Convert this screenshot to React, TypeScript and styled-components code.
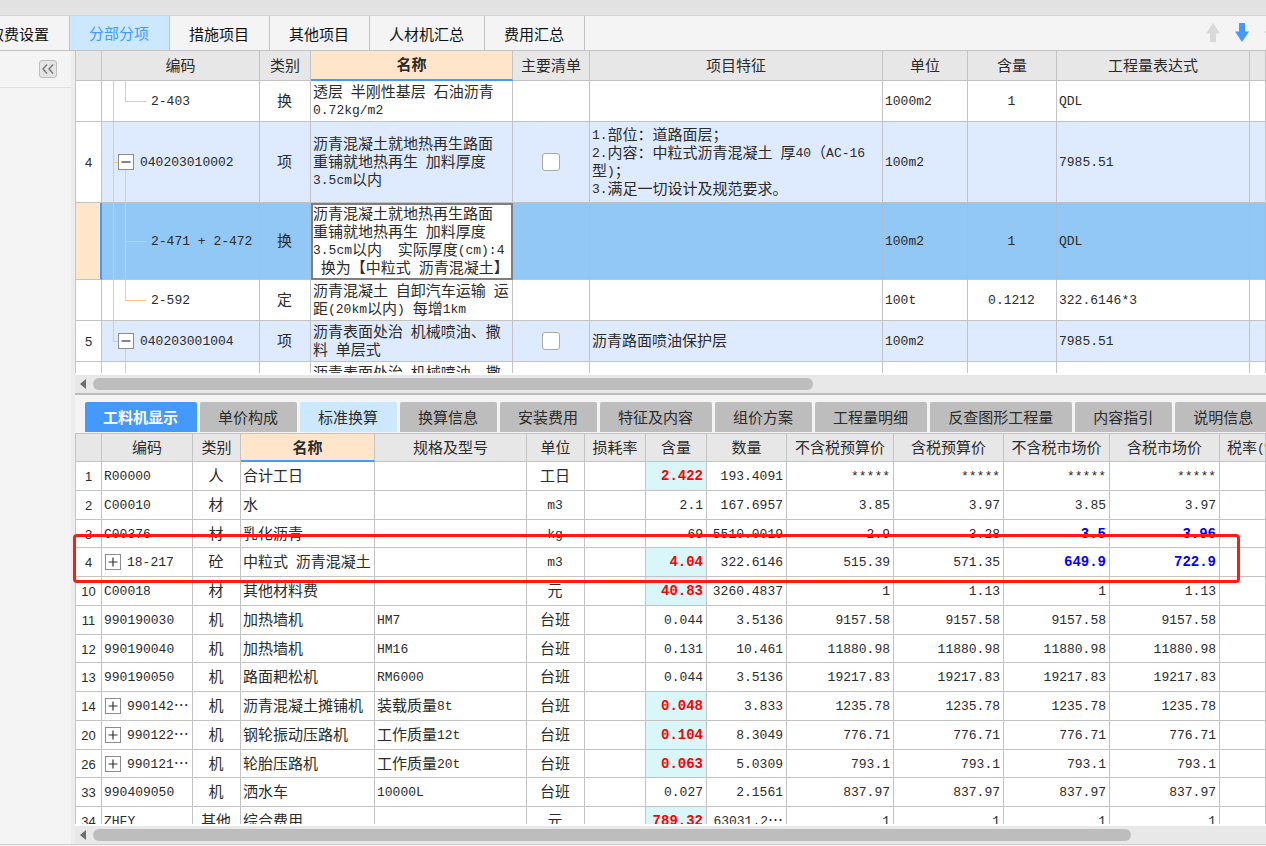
import React, { Fragment } from 'react';
import styled, { createGlobalStyle, css } from 'styled-components';

const cjk = "'Noto Sans CJK SC', 'Noto Sans', sans-serif";
const mono = "'Liberation Mono', 'Noto Sans CJK SC', monospace";
const line = '#c3c3c3';
const blue = '#4499ff';

const GlobalStyle = createGlobalStyle`
  * { box-sizing: border-box; }
  body { margin: 0; background: #f4f4f4; color: #2b2b2b; font: 15px/18px ${cjk}; }
  button { font: inherit; color: inherit; margin: 0; padding: 0; border: 0; background: none; cursor: pointer; }
`;

const Page = styled.div`
  display: flex;
  flex-direction: column;
  height: 100vh;
  overflow: hidden;
`;
const TopBand = styled.div`
  flex: none;
  height: 16px;
  background: #e2e2e2;
  border-bottom: 1px solid #d2d2d2;
`;
const TabBar = styled.nav`
  flex: none;
  display: flex;
  height: 35px;
  border-bottom: 1px solid ${line};
  overflow: hidden;
`;
const TabList = styled.div`
  display: flex;
  flex: none;
  margin-left: -30px;
`;
const MainTab = styled.button<{ $active?: boolean }>`
  padding: 2px 20px 0 19px;
  border-right: 1px solid ${line};
  color: #111;
  white-space: nowrap;
  ${(p) => p.$active && css`
    padding-top: 0;
    background: #cce8ff;
    color: ${blue};
  `}
`;
const MoveActions = styled.div`
  display: flex;
  align-items: center;
  gap: 15px;
  margin: 0 -17px 2px auto;
`;
const IconButton = styled.button`
  display: flex;
`;

const Body = styled.div`
  flex: 1;
  min-height: 0;
  display: flex;
`;
const Sidebar = styled.aside`
  flex: none;
  width: 75px;
  border-right: 4px solid #ededed;
`;
const SidebarHead = styled.div`
  display: flex;
  align-items: center;
  justify-content: flex-end;
  height: 37px;
  padding-right: 14px;
  border-bottom: 1px solid #e0e0e0;
`;
const CollapseButton = styled.button`
  display: flex;
  align-items: center;
  justify-content: center;
  width: 18px;
  height: 18px;
  border: 1px solid #bdbdbd;
  border-radius: 3px;
  background: #e4e4e4;
`;
const Content = styled.main`
  flex: 1;
  min-width: 0;
  display: flex;
  flex-direction: column;
`;
const UpperPane = styled.section`
  flex: 342 1 0;
  min-height: 0;
  display: flex;
  flex-direction: column;
`;
const LowerPane = styled.section`
  position: relative;
  flex: 449 1 0;
  min-height: 0;
  display: flex;
  flex-direction: column;
  border-top: 2px solid #bdbdbd;
`;
const TableView = styled.div`
  flex: 1;
  min-height: 0;
  overflow: hidden;
  background: #fff;
  border-bottom: 2px solid #fff;
`;
const Scrollbar = styled.div`
  flex: none;
  display: flex;
  align-items: center;
  gap: 6px;
  height: 18px;
  padding-left: 5px;
  background: #e8e8e8;
`;
const Thumb = styled.div<{ $share: string }>`
  width: ${(p) => p.$share};
  height: 12px;
  border-radius: 6px;
  background: #bdbdbd;
`;
const Footer = styled.footer`
  flex: none;
  height: 2px;
  border-top: 1px solid #cfcfcf;
`;

const Grid = styled.table`
  width: 100%;
  table-layout: fixed;
  border-collapse: separate;
  border-spacing: 0;
`;
const Column = styled.col<{ $w?: number }>`
  width: ${(p) => (p.$w ? `${p.$w}px` : 'auto')};
`;
const HeadCell = styled.th<{ $sorted?: boolean; $start?: boolean }>`
  height: 30px;
  padding: 0 0 2px;
  overflow: hidden;
  white-space: nowrap;
  font-weight: 400;
  text-align: ${(p) => (p.$start ? 'left' : 'center')};
  padding-left: ${(p) => (p.$start ? '7px' : '0')};
  background: #e7e7e7;
  border-right: 1px solid ${line};
  border-bottom: 1px solid ${line};
  &:first-child { border-left: 1px solid ${line}; }
  ${(p) => p.$sorted && css`
    background: #ffe6ca;
    border-bottom: 2px solid ${blue};
    font-weight: 700;
  `}
`;
const Cell = styled.td<{ $align?: 'left' | 'center' | 'right'; $mark?: 'rate' }>`
  position: relative;
  padding: 0 3px 2px 2px;
  overflow: hidden;
  white-space: pre;
  text-align: ${(p) => p.$align || 'left'};
  border-right: 1px solid ${line};
  border-bottom: 1px solid ${line};
  ${(p) => p.$mark && css`background: #d9f7f9;`}
`;
const IndexCell = styled.th`
  padding: 2px 0 0;
  background: #fff;
  border: 1px solid ${line};
  border-top: 0;
  font: 13px/18px 'Liberation Sans', sans-serif;
  text-align: center;
`;
const ItemRow = styled.tr<{ $h: number; $kind?: 'group' | 'selected' }>`
  height: ${(p) => p.$h}px;
  ${(p) => p.$kind === 'group' && css`background: #deeafe;`}
  ${(p) => p.$kind === 'selected' && css`
    background: #92c8f6;
    ${IndexCell} { background: #ffe6ca; border-right: 2px solid ${blue}; }
    ${Cell} { border-right-color: #a4bfd6; }
    ${Cell}:nth-child(4) {
      background: #fff;
      outline: 2px solid #7f7f7f;
      outline-offset: -2px;
    }
  `}
`;
const ResourceHead = styled.tr`
  ${HeadCell} { height: 29px; padding-bottom: 1px; border-top: 1px solid ${line}; }
`;
const ResourceRow = styled.tr`
  height: 29px;
  &:nth-child(4n + 3) { height: 28px; }
`;

const Latin = styled.span<{ $strong?: string }>`
  font-family: ${mono};
  font-size: 13px;
  line-height: 12px;
  vertical-align: 1px;
  ${(p) => p.$strong && css`
    font-size: 14px;
    font-weight: 700;
    color: ${p.$strong};
  `}
`;
const Check = styled.input`
  appearance: none;
  display: block;
  width: 18px;
  height: 18px;
  margin: 2px auto 0;
  border: 1px solid #a9a9a9;
  border-radius: 3px;
  background: #fff;
`;
const CodeBox = styled.div<{ $indent: number }>`
  display: flex;
  align-items: center;
  gap: 6px;
  padding-left: ${(p) => p.$indent}px;
`;
const Toggle = styled.button`
  flex: none;
  display: flex;
  align-items: center;
  justify-content: center;
  width: 16px;
  height: 16px;
  margin-top: 2px;
  border: 1px solid #8c8c8c;
  background: #fff;
`;
const Stem = styled.i<{ $x: number; $part: 'full' | 'upper' | 'lower' }>`
  position: absolute;
  left: ${(p) => p.$x}px;
  top: ${(p) => (p.$part === 'lower' ? 'calc(50% + 8px)' : '0')};
  bottom: ${(p) => (p.$part === 'upper' ? '50%' : '-1px')};
  width: 1px;
  background: #ffc777;
`;
const Twig = styled.i<{ $x: number; $w: number }>`
  position: absolute;
  left: ${(p) => p.$x}px;
  top: 50%;
  width: ${(p) => p.$w}px;
  height: 1px;
  background: #ffc777;
`;

const DetailTabs = styled.nav`
  flex: none;
  display: flex;
  gap: 3px;
  height: 38px;
  padding: 7px 0 1px 10px;
  overflow: hidden;
`;
const DetailTab = styled.button<{ $tone?: 'active' | 'hint' }>`
  flex: none;
  padding: 0 19px 0 18px;
  border-radius: 2px 2px 0 0;
  white-space: nowrap;
  background: #bdbdbd;
  ${(p) => p.$tone === 'active' && css`background: ${blue}; color: #fff; font-weight: 700;`}
  ${(p) => p.$tone === 'hint' && css`background: #cce8ff;`}
`;
const Highlight = styled.div`
  position: absolute;
  left: -2px;
  top: 139px;
  width: 1167px;
  height: 49px;
  border: 3px solid #ff1b10;
  border-radius: 4px;
  pointer-events: none;
`;

/* Half-width runs are set in the fixed-pitch face, the rest stays in the CJK face. */
function Mixed({ text, strong }: { text: string; strong?: string }) {
  return (
    <>
      {text.split(/([\x20-\x7e]+)/).map((part, i) =>
        i % 2 ? <Latin key={i} $strong={strong}>{part}</Latin> : <Fragment key={i}>{part}</Fragment>,
      )}
    </>
  );
}

function Arrow({ dir, color }: { dir: 'up' | 'down' | 'left'; color: string }) {
  const turn = { up: 0, down: 180, left: -90 }[dir];
  const side = dir === 'left';
  return (
    <svg width={side ? 19 : 14} height={side ? 14 : 19} viewBox={side ? '-9.5 -7 19 14' : '-7 -9.5 14 19'}>
      <path transform={`rotate(${turn})`} d="M0 -9.5L7 1H3V9.5H-3V1H-7Z" fill={color} />
    </svg>
  );
}

function ScrollTrack({ share, label }: { share: string; label: string }) {
  return (
    <Scrollbar>
      <IconButton aria-label={label}>
        <svg width="7" height="10" viewBox="0 0 7 10"><path d="M6 0V10L0 5Z" fill="#6d6d72" /></svg>
      </IconButton>
      <Thumb $share={share} />
    </Scrollbar>
  );
}

function ExpandToggle({ open }: { open: boolean }) {
  return (
    <Toggle aria-label={open ? '折叠' : '展开'}>
      <svg width="10" height="10" viewBox="0 0 10 10">
        <path d={open ? 'M0.5 5H9.5' : 'M0.5 5H9.5M5 0.5V9.5'} stroke="#333" strokeWidth="1.2" />
      </svg>
    </Toggle>
  );
}

const mainTabs = ['取费设置', '分部分项', '措施项目', '其他项目', '人材机汇总', '费用汇总'];
const itemHeads = ['', '编码', '类别', '名称', '主要清单', '项目特征', '单位', '含量', '工程量表达式', ''];
const itemWidths = [27, 158, 51, 202, 77, 293, 85, 89, 193];

type Item = {
  no: string; code: string; type: string; name: string; feature?: string;
  unit: string; rate: string; expr: string; h: number;
  kind?: 'group' | 'selected'; node: 'leaf' | 'last' | 'group' | 'lastGroup' | 'rest';
};
const items: Item[] = [
  { no: '', code: '2-403', type: '换', name: '透层 半刚性基层 石油沥青\n0.72kg/m2', unit: '1000m2', rate: '1', expr: 'QDL', h: 41, node: 'last' },
  { no: '4', code: '040203010002', type: '项', name: '沥青混凝土就地热再生路面\n重铺就地热再生 加料厚度\n3.5cm以内', feature: '1.部位：道路面层；\n2.内容：中粒式沥青混凝土 厚40（AC-16\n型)；\n3.满足一切设计及规范要求。', unit: '100m2', rate: '', expr: '7985.51', h: 81, kind: 'group', node: 'group' },
  { no: '', code: '2-471 + 2-472', type: '换', name: '沥青混凝土就地热再生路面\n重铺就地热再生 加料厚度\n3.5cm以内  实际厚度(cm):4\n 换为【中粒式 沥青混凝土】', unit: '100m2', rate: '1', expr: 'QDL', h: 77, kind: 'selected', node: 'leaf' },
  { no: '', code: '2-592', type: '定', name: '沥青混凝土 自卸汽车运输 运\n距(20km以内) 每增1km', unit: '100t', rate: '0.1212', expr: '322.6146*3', h: 41, node: 'last' },
  { no: '5', code: '040203001004', type: '项', name: '沥青表面处治 机械喷油、撒\n料 单层式', feature: '沥青路面喷油保护层', unit: '100m2', rate: '', expr: '7985.51', h: 41, kind: 'group', node: 'lastGroup' },
  { no: '', code: '', type: '', name: '沥青表面处治 机械喷油、撒\n料 单层式', unit: '', rate: '', expr: '', h: 41, node: 'rest' },
];

function ItemCode({ item }: { item: Item }) {
  const { node, code } = item;
  const group = node === 'group' || node === 'lastGroup';
  return (
    <>
      {node !== 'rest' && <Stem $x={11} $part={node === 'lastGroup' ? 'upper' : 'full'} />}
      {group && <Twig $x={11} $w={5} />}
      {group && <Stem $x={23} $part="lower" />}
      {(node === 'leaf' || node === 'rest') && <Stem $x={23} $part="full" />}
      {node === 'last' && <Stem $x={23} $part="upper" />}
      {(node === 'leaf' || node === 'last') && <Twig $x={23} $w={21} />}
      <CodeBox $indent={group ? 14 : 47}>
        {group && <ExpandToggle open />}
        <span><Mixed text={code} /></span>
      </CodeBox>
    </>
  );
}

const detailTabs = ['工料机显示', '单价构成', '标准换算', '换算信息', '安装费用', '特征及内容', '组价方案', '工程量明细', '反查图形工程量', '内容指引', '说明信息'];
const resourceHeads = ['', '编码', '类别', '名称', '规格及型号', '单位', '损耗率', '含量', '数量', '不含税预算价', '含税预算价', '不含税市场价', '含税市场价', '税率(%)'];
const resourceWidths = [27, 91, 48, 134, 152, 58, 61, 61, 80, 107, 110, 106, 110];

type Resource = {
  no: string; code: string; type: string; name: string; spec: string; unit: string;
  rate: string; qty: string; prices: string[]; folded?: boolean; hot?: boolean; edited?: boolean;
};
const same = (a: string, b = a) => [a, b, a, b];
const resources: Resource[] = [
  { no: '1', code: 'R00000', type: '人', name: '合计工日', spec: '', unit: '工日', rate: '2.422', qty: '193.4091', prices: same('*****'), hot: true },
  { no: '2', code: 'C00010', type: '材', name: '水', spec: '', unit: 'm3', rate: '2.1', qty: '167.6957', prices: same('3.85', '3.97') },
  { no: '3', code: 'C00376', type: '材', name: '乳化沥青', spec: '', unit: 'kg', rate: '69', qty: '5510.0019', prices: ['2.9', '3.28', '3.5', '3.96'], edited: true },
  { no: '4', code: '18-217', type: '砼', name: '中粒式 沥青混凝土', spec: '', unit: 'm3', rate: '4.04', qty: '322.6146', prices: ['515.39', '571.35', '649.9', '722.9'], folded: true, hot: true, edited: true },
  { no: '10', code: 'C00018', type: '材', name: '其他材料费', spec: '', unit: '元', rate: '40.83', qty: '3260.4837', prices: same('1', '1.13'), hot: true },
  { no: '11', code: '990190030', type: '机', name: '加热墙机', spec: 'HM7', unit: '台班', rate: '0.044', qty: '3.5136', prices: same('9157.58') },
  { no: '12', code: '990190040', type: '机', name: '加热墙机', spec: 'HM16', unit: '台班', rate: '0.131', qty: '10.461', prices: same('11880.98') },
  { no: '13', code: '990190050', type: '机', name: '路面耙松机', spec: 'RM6000', unit: '台班', rate: '0.044', qty: '3.5136', prices: same('19217.83') },
  { no: '14', code: '990142…', type: '机', name: '沥青混凝土摊铺机', spec: '装载质量8t', unit: '台班', rate: '0.048', qty: '3.833', prices: same('1235.78'), folded: true, hot: true },
  { no: '20', code: '990122…', type: '机', name: '钢轮振动压路机', spec: '工作质量12t', unit: '台班', rate: '0.104', qty: '8.3049', prices: same('776.71'), folded: true, hot: true },
  { no: '26', code: '990121…', type: '机', name: '轮胎压路机', spec: '工作质量20t', unit: '台班', rate: '0.063', qty: '5.0309', prices: same('793.1'), folded: true, hot: true },
  { no: '33', code: '990409050', type: '机', name: '洒水车', spec: '10000L', unit: '台班', rate: '0.027', qty: '2.1561', prices: same('837.97') },
  { no: '34', code: 'ZHFY', type: '其他', name: '综合费用', spec: '', unit: '元', rate: '789.32', qty: '63031.2…', prices: same('1'), hot: true },
];

export default function App() {
  return (
    <Page lang="zh-CN">
      <GlobalStyle />
      <TopBand />
      <TabBar>
        <TabList>
          {mainTabs.map((t) => <MainTab key={t} $active={t === '分部分项'}>{t}</MainTab>)}
        </TabList>
        <MoveActions>
          <IconButton aria-label="上移"><Arrow dir="up" color="#d9d9d9" /></IconButton>
          <IconButton aria-label="下移"><Arrow dir="down" color={blue} /></IconButton>
          <IconButton aria-label="左移"><Arrow dir="left" color="#d9d9d9" /></IconButton>
        </MoveActions>
      </TabBar>
      <Body>
        <Sidebar>
          <SidebarHead>
            <CollapseButton aria-label="收起">
              <svg width="12" height="10" viewBox="0 0 12 10" fill="none" stroke="#777" strokeWidth="1.4">
                <path d="M5 0.5L1 5L5 9.5M11 0.5L7 5L11 9.5" />
              </svg>
            </CollapseButton>
          </SidebarHead>
        </Sidebar>
        <Content>
          <UpperPane>
            <TableView>
              <Grid>
                <colgroup>
                  {itemWidths.map((w, i) => <Column key={i} $w={w} />)}
                  <Column />
                </colgroup>
                <thead>
                  <tr>{itemHeads.map((h, i) => <HeadCell key={i} $sorted={h === '名称'}>{h}</HeadCell>)}</tr>
                </thead>
                <tbody>
                  {items.map((it, i) => (
                    <ItemRow key={i} $h={it.h} $kind={it.kind}>
                      <IndexCell>{it.no}</IndexCell>
                      <Cell><ItemCode item={it} /></Cell>
                      <Cell $align="center">{it.type}</Cell>
                      <Cell><Mixed text={it.name} /></Cell>
                      <Cell>{it.kind === 'group' && <Check type="checkbox" aria-label="主要清单" />}</Cell>
                      <Cell><Mixed text={it.feature || ''} /></Cell>
                      <Cell><Mixed text={it.unit} /></Cell>
                      <Cell $align="center"><Mixed text={it.rate} /></Cell>
                      <Cell><Mixed text={it.expr} /></Cell>
                      <Cell />
                    </ItemRow>
                  ))}
                </tbody>
              </Grid>
            </TableView>
            <ScrollTrack share="60.7%" label="清单向左滚动" />
          </UpperPane>
          <LowerPane>
            <DetailTabs>
              {detailTabs.map((t, i) => (
                <DetailTab key={t} $tone={i === 0 ? 'active' : i === 2 ? 'hint' : undefined}>{t}</DetailTab>
              ))}
            </DetailTabs>
            <TableView>
              <Grid>
                <colgroup>
                  {resourceWidths.map((w, i) => <Column key={i} $w={w} />)}
                  <Column />
                </colgroup>
                <thead>
                  <ResourceHead>
                    {resourceHeads.map((h, i) => (
                      <HeadCell key={i} $sorted={h === '名称'} $start={i === 13}><Mixed text={h} /></HeadCell>
                    ))}
                  </ResourceHead>
                </thead>
                <tbody>
                  {resources.map((r) => (
                    <ResourceRow key={r.no}>
                      <IndexCell>{r.no}</IndexCell>
                      <Cell>
                        <CodeBox $indent={r.folded ? 1 : 0}>
                          {r.folded && <ExpandToggle open={false} />}
                          <span><Mixed text={r.code} /></span>
                        </CodeBox>
                      </Cell>
                      <Cell $align="center">{r.type}</Cell>
                      <Cell><Mixed text={r.name} /></Cell>
                      <Cell><Mixed text={r.spec} /></Cell>
                      <Cell $align="center"><Mixed text={r.unit} /></Cell>
                      <Cell />
                      <Cell $align="right" $mark={r.hot ? 'rate' : undefined}>
                        <Mixed text={r.rate} strong={r.hot ? '#ff0000' : undefined} />
                      </Cell>
                      <Cell $align="right"><Mixed text={r.qty} /></Cell>
                      {r.prices.map((p, i) => (
                        <Cell key={i} $align="right">
                          <Mixed text={p} strong={r.edited && i > 1 ? '#0000ff' : undefined} />
                        </Cell>
                      ))}
                      <Cell />
                    </ResourceRow>
                  ))}
                </tbody>
              </Grid>
            </TableView>
            <ScrollTrack share="87.5%" label="工料机向左滚动" />
            <Highlight />
          </LowerPane>
        </Content>
      </Body>
      <Footer />
    </Page>
  );
}
